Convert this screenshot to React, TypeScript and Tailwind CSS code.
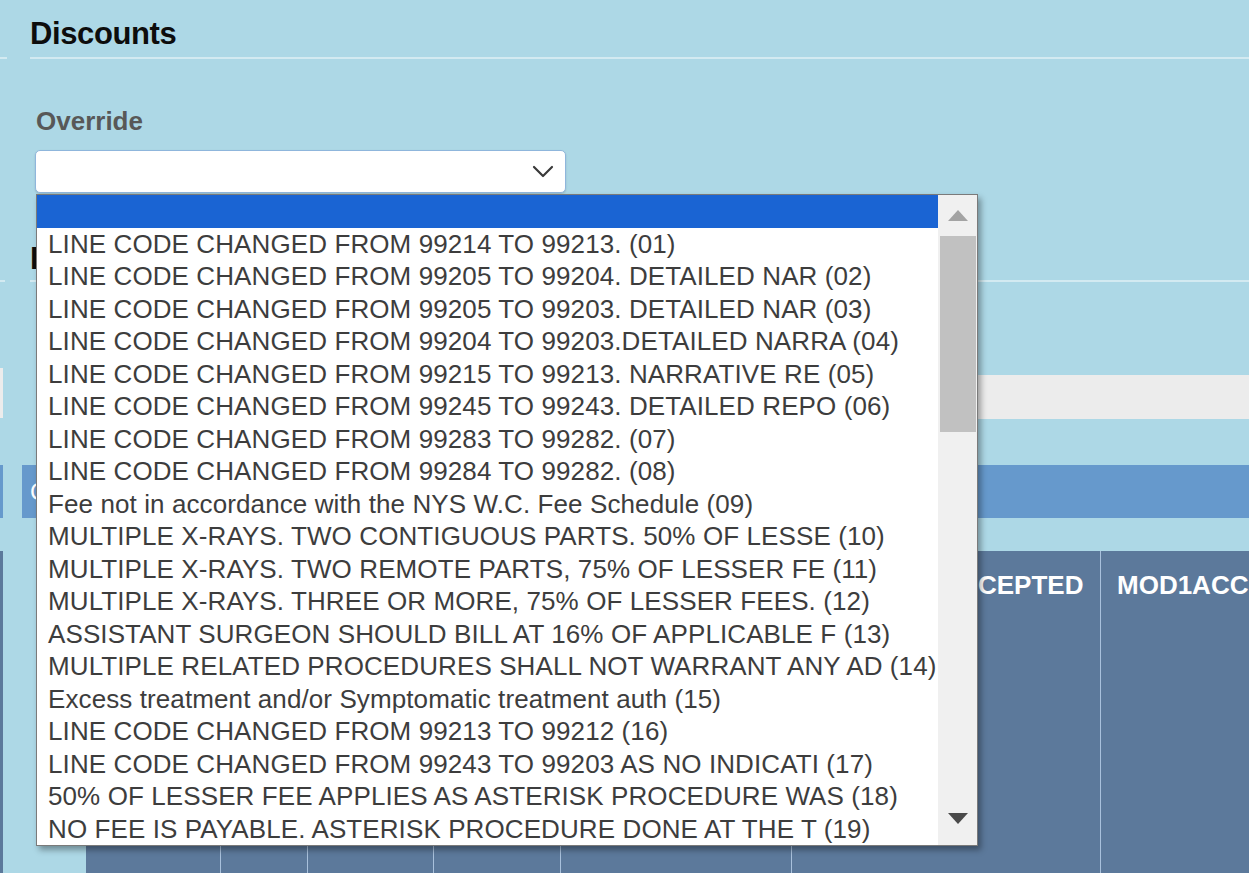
import React from "react";

const items: string[] = [
  "",
  "LINE CODE CHANGED FROM 99214 TO 99213. (01)",
  "LINE CODE CHANGED FROM 99205 TO 99204. DETAILED NAR (02)",
  "LINE CODE CHANGED FROM 99205 TO 99203. DETAILED NAR (03)",
  "LINE CODE CHANGED FROM 99204 TO 99203.DETAILED NARRA (04)",
  "LINE CODE CHANGED FROM 99215 TO 99213. NARRATIVE RE (05)",
  "LINE CODE CHANGED FROM 99245 TO 99243. DETAILED REPO (06)",
  "LINE CODE CHANGED FROM 99283 TO 99282. (07)",
  "LINE CODE CHANGED FROM 99284 TO 99282. (08)",
  "Fee not in accordance with the NYS W.C. Fee Schedule (09)",
  "MULTIPLE X-RAYS. TWO CONTIGUOUS PARTS. 50% OF LESSE (10)",
  "MULTIPLE X-RAYS. TWO REMOTE PARTS, 75% OF LESSER FE (11)",
  "MULTIPLE X-RAYS. THREE OR MORE, 75% OF LESSER FEES. (12)",
  "ASSISTANT SURGEON SHOULD BILL AT 16% OF APPLICABLE F (13)",
  "MULTIPLE RELATED PROCEDURES SHALL NOT WARRANT ANY AD (14)",
  "Excess treatment and/or Symptomatic treatment auth (15)",
  "LINE CODE CHANGED FROM 99213 TO 99212 (16)",
  "LINE CODE CHANGED FROM 99243 TO 99203 AS NO INDICATI (17)",
  "50% OF LESSER FEE APPLIES AS ASTERISK PROCEDURE WAS (18)",
  "NO FEE IS PAYABLE. ASTERISK PROCEDURE DONE AT THE T (19)",
];

export default function App() {
  return (
    <div
      className="h-[873px] w-full overflow-hidden bg-[#add8e6]"
      style={{ fontFamily: '"Liberation Sans", Arial, sans-serif' }}
    >
      {/* Heading 1 */}
      <div className="h-[57px] pl-[30px] pt-[18px]">
        <h2 className="text-[31px] leading-[32px] font-bold tracking-[-0.4px] text-[#0d0d0d]">
          Discounts
        </h2>
      </div>
      <div className="flex h-[2px]">
        <div className="w-[7px] bg-[#d3eaf1]" />
        <div className="ml-[23px] flex-1 bg-[#d3eaf1]" />
      </div>

      {/* Override */}
      <div className="pl-[35px] pt-[47px]">
        <div className="text-[26px] leading-[30px] font-bold text-[#585858] pl-[1px]">
          Override
        </div>
        <div className="relative mt-[14px] w-[531px]">
          <div className="flex h-[43px] items-center justify-end rounded-[5px] border border-[#8fb6dc] bg-white pr-[11px] shadow-[0_1px_2px_rgba(0,0,0,0.15)]">
            <svg width="22" height="13" viewBox="0 0 22 13" fill="none">
              <polyline
                points="2,2 11,11 20,2"
                stroke="#3a3a3a"
                strokeWidth="2.2"
                strokeLinecap="round"
                strokeLinejoin="round"
              />
            </svg>
          </div>

          {/* Dropdown list */}
          <div className="absolute left-[1px] top-[44px] z-10 flex h-[652px] w-[942px] border border-[#7a7a7a] bg-white shadow-[3px_4px_6px_rgba(0,0,0,0.35)]">
            <div className="flex-1 overflow-hidden">
              {items.map((t, i) => (
                <div
                  key={i}
                  className={
                    i === 0
                      ? "h-[32.5px] bg-[#1a64d3] pl-[11px] text-[26px] leading-[32.5px] tracking-[0.1px] whitespace-nowrap text-white"
                      : "h-[32.5px] pl-[11px] text-[26px] leading-[32.5px] tracking-[0.1px] whitespace-nowrap text-[#3d3d3d]"
                  }
                >
                  {t}
                </div>
              ))}
            </div>
            <div className="flex w-[39px] flex-col bg-[#f0f0f0]">
              <div className="flex h-[41px] items-center justify-center">
                <svg width="20" height="11" viewBox="0 0 20 11">
                  <polygon points="10,0 20,11 0,11" fill="#a3a3a3" />
                </svg>
              </div>
              <div className="ml-[2px] mr-[1px] h-[196px] bg-[#c1c1c1]" />
              <div className="flex-1" />
              <div className="flex h-[38px] items-start justify-center pt-[6px]">
                <svg width="20" height="11" viewBox="0 0 20 11">
                  <polygon points="0,0 20,0 10,11" fill="#4a4a4a" />
                </svg>
              </div>
            </div>
          </div>
        </div>
      </div>

      {/* Heading 2 */}
      <div className="h-[87px] pl-[30px] pt-[50px]">
        <h2 className="text-[31px] leading-[32px] font-bold tracking-[-0.4px] text-[#0d0d0d]">
          Items
        </h2>
      </div>
      <div className="flex h-[2px]">
        <div className="w-[5px] bg-[#d3eaf1]" />
        <div className="ml-[25px] flex-1 bg-[#d3eaf1]" />
      </div>

      {/* Gray bar */}
      <div className="mt-[86px] flex h-[54px] items-start">
        <div className="h-[50px] w-[3px] bg-[#ececec]" />
        <div className="ml-[45px] mt-[7px] h-[44px] flex-1 bg-[#ececec]" />
      </div>

      {/* Blue bar */}
      <div className="mt-[43px] flex h-[53px]">
        <div className="w-[3px] bg-[#6699cc]" />
        <div className="ml-[19px] flex flex-1 items-center bg-[#6699cc] pl-[8px]">
          <span className="text-[24px] text-white">CPT</span>
        </div>
      </div>

      {/* Table header */}
      <div className="mt-[33px] flex h-[340px]">
        <div className="w-[3px] bg-[#5c799b]" />
        <div className="ml-[83px] flex flex-1 overflow-hidden bg-[#5c799b] text-[26px] leading-[30px] font-bold text-white">
          <div className="w-[135px] shrink-0 border-r border-[#a9c1dc]" />
          <div className="w-[87px] shrink-0 border-r border-[#a9c1dc]" />
          <div className="w-[126px] shrink-0 border-r border-[#a9c1dc]" />
          <div className="w-[127px] shrink-0 border-r border-[#a9c1dc]" />
          <div className="w-[231px] shrink-0 border-r border-[#a9c1dc]" />
          <div className="w-[309px] shrink-0 border-r border-[#a9c1dc] pt-[19px] text-right whitespace-nowrap">
            <div className="ml-[186px] overflow-hidden pr-[17px]">CEPTED</div>
          </div>
          <div className="w-[320px] shrink-0 pl-[16px] pt-[19px] whitespace-nowrap">MOD1ACCEPTED</div>
        </div>
      </div>
    </div>
  );
}
